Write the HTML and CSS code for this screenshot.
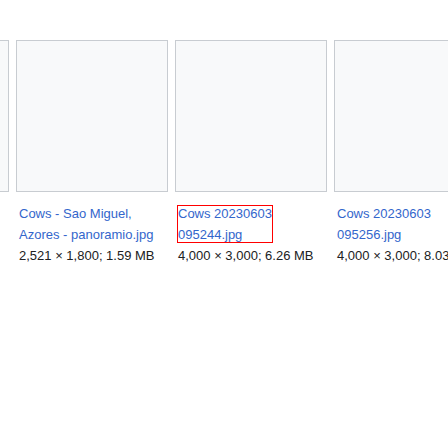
FILE: index.html
```html
<!DOCTYPE html>
<html lang="en">
<head>
<meta charset="utf-8">
<title>Gallery</title>
<link rel="stylesheet" href="styles.css">
</head>
<body>
<div class="gallery">
  <div class="item">
    <div class="thumb"></div>
    <div class="caption"></div>
  </div>
  <div class="item">
    <div class="thumb"></div>
    <div class="caption"><a class="name" href="#">Cows - Sao Miguel, Azores - panoramio.jpg</a><div class="meta">2,521 × 1,800; 1.59 MB</div></div>
  </div>
  <div class="item">
    <div class="thumb"></div>
    <div class="caption"><a class="name focused" href="#">Cows 20230603 095244.jpg</a><div class="meta">4,000 × 3,000; 6.26 MB</div></div>
  </div>
  <div class="item">
    <div class="thumb"></div>
    <div class="caption"><a class="name" href="#">Cows 20230603 095256.jpg</a><div class="meta">4,000 × 3,000; 8.03 MB</div></div>
  </div>
</div>
</body>
</html>
```
FILE: styles.css
```css
html {
  overflow: hidden;
  background: #ffffff;
}
body {
  margin: 0;
  font-family: "Liberation Sans", Arial, sans-serif;
  font-size: 13px;
  color: #202122;
}
.gallery {
  display: flex;
  gap: 7px;
  margin-left: -143px;
  padding-top: 40px;
  width: max-content;
}
.item {
  width: 152px;
  flex: none;
}
.thumb {
  box-sizing: border-box;
  width: 152px;
  height: 152px;
  background: #f8f9fa;
  border: 1px solid #c8ccd1;
}
.caption {
  margin-top: 11px;
  padding: 0 3px;
  line-height: 21px;
  min-height: 63px;
}
.name {
  color: #3366cc;
  text-decoration: none;
}
.focused {
  display: inline-block;
  position: relative;
  width: 94px;
  vertical-align: top;
}
.focused::after {
  content: "";
  position: absolute;
  left: -1px;
  right: -1px;
  top: 2px;
  bottom: 2px;
  border: 1px solid #ff0000;
}
.meta {
  white-space: nowrap;
}
```
